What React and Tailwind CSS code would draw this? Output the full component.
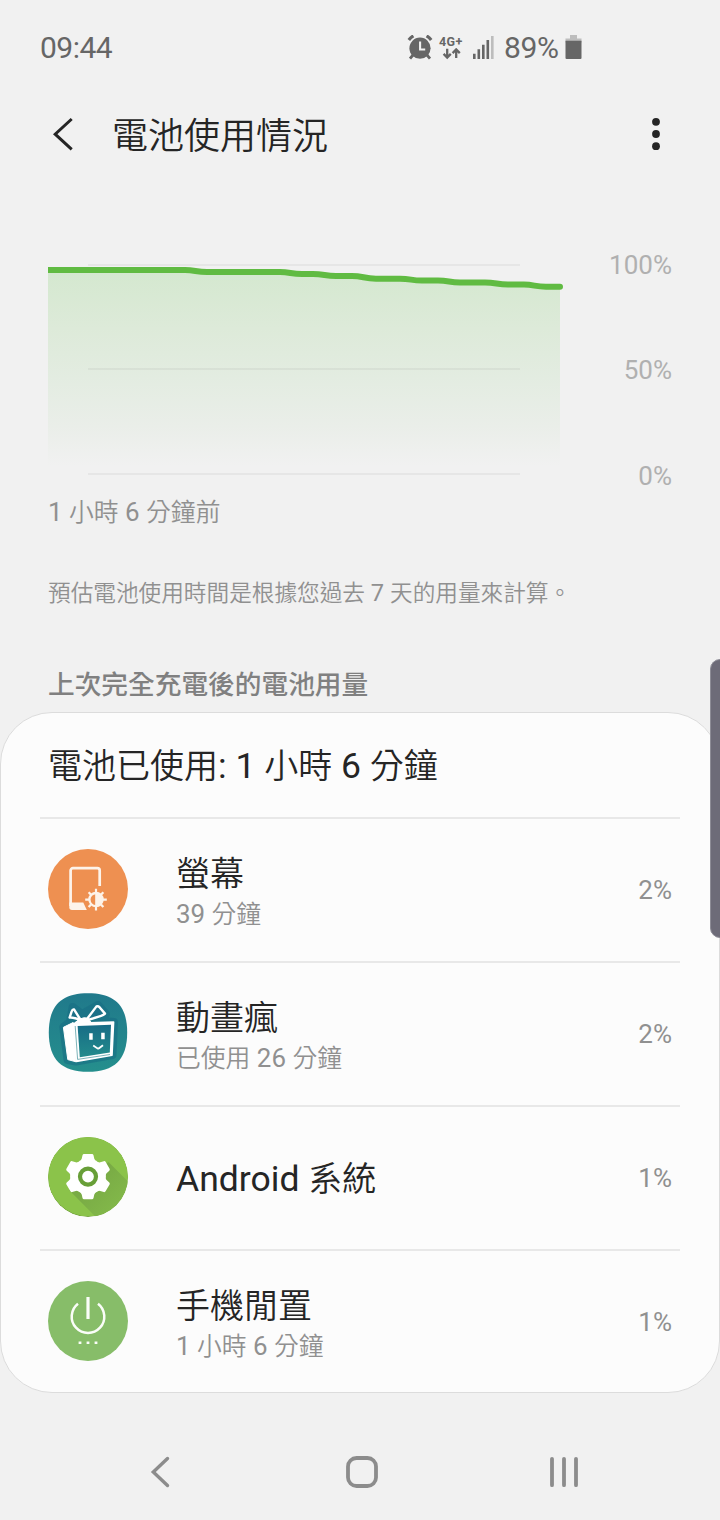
const apps = [
  { name: '螢幕', detail: '39 分鐘', percent: '2%', Icon: ScreenIcon },
  { name: '動畫瘋', detail: '已使用 26 分鐘', percent: '2%', Icon: GiftIcon },
  { name: 'Android 系統', detail: null, percent: '1%', Icon: SystemIcon },
  { name: '手機閒置', detail: '1 小時 6 分鐘', percent: '1%', Icon: IdleIcon },
];

// Latin runs are set slightly larger than the Chinese characters around them
function MixedText({ children }) {
  return children.split(/([\x20-\x7e]+)/).map((part, i) =>
    i % 2 ? (
      <span key={i} className="text-[1.045em] leading-none whitespace-pre">
        {part}
      </span>
    ) : (
      part
    )
  );
}

function ScreenIcon() {
  return (
    <svg width="80" height="80" viewBox="0 0 80 80" className="shrink-0">
      <circle cx="40" cy="40" r="40" fill="#ee9051" />
      <path d="M51.7 37V21.6a2.4 2.4 0 0 0-2.4-2.4H25a2.4 2.4 0 0 0-2.4 2.4V57" fill="none" stroke="#fdf3ea" strokeWidth="2.7" />
      <path d="M21.3 53.6H35.3L38.8 61H24a2.7 2.7 0 0 1-2.7-2.7z" fill="#fdf3ea" />
      <g transform="translate(48 50.6)" stroke="#fdf3ea" fill="none">
        <circle r="6.6" strokeWidth="2.3" />
        <path d="M-.8-6.3H0A6.3 6.3 0 0 1 0 6.3H-.8z" fill="#fdf3ea" stroke="none" />
        <path
          d="M0-10.8V-7M0 10.8V7M-10.8 0H-7M10.8 0H7M-7.4-7.4L-5-5M7.4-7.4L5-5M-7.4 7.4L-5 5M7.4 7.4L5 5"
          strokeWidth="2.2"
        />
      </g>
    </svg>
  );
}

function GiftIcon() {
  return (
    <svg width="80" height="80" viewBox="0 0 80 80" className="shrink-0">
      <defs>
        <linearGradient id="giftBg" x1="0" y1="0" x2="0" y2="1">
          <stop offset="0" stopColor="#20798b" />
          <stop offset="1" stopColor="#258f8d" />
        </linearGradient>
        <linearGradient id="giftScreen" x1="0" y1="0" x2="0" y2="1">
          <stop offset="0" stopColor="#176c86" />
          <stop offset="1" stopColor="#238b8c" />
        </linearGradient>
      </defs>
      <path
        d="M40 .3C66 .3 79.2 12 79.2 39.5S66 78.8 40 78.8.8 67 .8 39.5 14 .3 40 .3z"
        fill="url(#giftBg)"
      />
      <path
        d="M24.7 14L34 21 50 12 58 21 56 28 66 29 64.5 62 28 68.5 19.5 67 15.3 34 22 29z"
        fill="#176c83"
        stroke="#176c83"
        strokeWidth="8"
        strokeLinejoin="round"
        opacity=".55"
      />
      <path d="M15.4 34.3L25 29.6 28 68.8 19.8 66.6z" fill="#fff" stroke="#fff" strokeLinejoin="round" />
      <path d="M25.4 30.2L65.6 29 64 62.3 28.4 68.4z" fill="#fff" stroke="#fff" strokeWidth="1.6" strokeLinejoin="round" />
      <path d="M29.6 33L63 31.8 61.8 59.6 31.8 64.2z" fill="url(#giftScreen)" />
      <path d="M27.2 33L29.6 66.4 62 61.5" fill="none" stroke="#238089" strokeWidth=".6" />
      <path d="M33 27.5L26 16.4Q24.5 16 23.6 18.6L21.6 24.6Q26 24.2 33 27.5z" fill="#1b7087" stroke="#fff" strokeWidth="2.4" strokeLinejoin="round" />
      <path d="M38 27.3L48.5 13.4Q50 12.7 51.5 14.2L57 20.6Q56 22.6 38 27.3z" fill="#1b7087" stroke="#fff" strokeWidth="2.4" strokeLinejoin="round" />
      <path d="M27 29.6Q31 25.5 35.6 24.8T43 29.4z" fill="#fff" stroke="#fff" />
      <path d="M41.2 40.3h3.5v6.5h-3.5zM53.2 39.7h3.5v6.5h-3.5z" fill="#fff" />
      <path d="M45.2 52.6L49.6 55.4Q50.6 55.8 51.4 55L55 52.2" fill="none" stroke="#fff" strokeWidth="1.8" />
    </svg>
  );
}

const toothAngles = [0, 60, 120, 180, 240, 300];

function SystemIcon() {
  return (
    <svg width="80" height="80" viewBox="0 0 80 80" className="shrink-0">
      <defs>
        <clipPath id="systemClip">
          <circle cx="40" cy="40" r="40" />
        </clipPath>
        <linearGradient id="systemShadow" gradientUnits="userSpaceOnUse" x1="45" y1="45" x2="72" y2="72">
          <stop offset="0" stopColor="#79ab45" />
          <stop offset="1" stopColor="#83b94a" />
        </linearGradient>
      </defs>
      <g clipPath="url(#systemClip)">
        <circle cx="40" cy="40" r="40" fill="#6f9c3b" />
        <circle cx="40" cy="39.2" r="40" fill="#8bc34a" />
        <path d="M60.5 25L100 64.5V79.2H47L21 53z" fill="url(#systemShadow)" />
      </g>
      <g transform="translate(40 39.6)" fill="#fff">
        <circle r="17.8" />
        {toothAngles.map((angle) => (
          <path
            key={angle}
            transform={`rotate(${angle})`}
            d="M-10-14Q-7-15.4-6.3-17.8L-5.5-21.4Q-5.2-22.6-4-22.6H4Q5.2-22.6 5.5-21.4L6.3-17.8Q7-15.4 10-14z"
          />
        ))}
        <circle r="8" stroke="#689f38" strokeWidth="4.2" />
      </g>
    </svg>
  );
}

function IdleIcon() {
  return (
    <svg width="80" height="80" viewBox="0 0 80 80" className="shrink-0">
      <circle cx="40" cy="40" r="40" fill="#87bd69" />
      <path d="M30 22.8A16.3 16.3 0 1 0 50 22.8" fill="none" stroke="#fafdf8" strokeWidth="2.5" />
      <path d="M40 16V38" stroke="#fafdf8" strokeWidth="3.2" />
      <path d="M30.6 60.5h2.8v2.6h-2.8zM38.6 60.5h2.8v2.6h-2.8zM46.6 60.5h2.8v2.6h-2.8z" fill="#fafdf8" />
    </svg>
  );
}

function StatusBar() {
  return (
    <div className="flex h-24 items-center pl-10 text-[30px] text-[#666]">
      <span className="w-[367px] pb-px tracking-[-0.5px]">09:44</span>
      <svg width="26" height="26" viewBox="0 0 26 26" className="mr-[6px]">
        <circle cx="13" cy="13.2" r="10.6" fill="#666" />
        <path d="M1.8 4.9Q3.8 2.4 6.4 .9M24.2 4.9Q22.2 2.4 19.6 .9" fill="none" stroke="#666" strokeWidth="3.2" />
        <path d="M6 20L3 23.7M20 20L23 23.7" stroke="#666" strokeWidth="2.8" />
        <path d="M13.1 6.6V14.5H18.2" fill="none" stroke="#f1f1f1" strokeWidth="2.1" />
      </svg>
      <div className="flex w-[34px] flex-col pb-[2px]">
        <span className="h-[13px] text-[12.5px] leading-[13px] font-bold tracking-[0.4px]">4G+</span>
        <svg width="24" height="12" viewBox="0 0 24 12">
          <path d="M8.2 .8V9M4.6 5.9L8.2 9.6 11.8 5.9M17.2 10V2M13.6 5.1L17.2 1.4 20.8 5.1" fill="none" stroke="#666" strokeWidth="2.3" />
        </svg>
      </div>
      <svg width="22" height="24" viewBox="0 0 22 24" className="mr-[9px]">
        <path d="M0 17.7h2.6V23H0zM4.5 13.3h2.6V23H4.5zM9 8.7h2.6V23H9zM13.5 4h2.6V23h-2.6z" fill="#666" />
        <path d="M18 0h2.6v23H18z" fill="#bdbdbd" />
      </svg>
      <span className="w-[61px] pb-px tracking-[-0.3px]">89%</span>
      <svg width="17" height="26" viewBox="0 0 17 26">
        <path d="M5 0h7v3.5H16.5V7.5H.5V3.5H5z" fill="#bdbdbd" />
        <path d="M.5 5.8h16V23a1 1 0 0 1-1 1h-14a1 1 0 0 1-1-1z" fill="#666" />
      </svg>
    </div>
  );
}

function AppBar() {
  return (
    <header className="flex h-[76px] items-center justify-between pr-[58px] pl-[50px]">
      <div className="flex items-center">
        <svg width="26" height="36" viewBox="0 0 26 36">
          <path d="M21.7 3L5.2 18.2 21.7 33.4" fill="none" stroke="#252525" strokeWidth="3" />
        </svg>
        <h1 className="ml-9 pt-[5px] text-[36px] leading-[48px]">電池使用情況</h1>
      </div>
      <svg width="12" height="36" viewBox="0 0 12 36" fill="#252525">
        <circle cx="6" cy="5.8" r="3.9" />
        <circle cx="6" cy="18" r="3.9" />
        <circle cx="6" cy="30.2" r="3.9" />
      </svg>
    </header>
  );
}

function BatteryChart() {
  return (
    <section className="flex h-[318px] pt-[68px] pl-12">
      <svg width="530" height="250" viewBox="48 240 530 250" className="shrink-0">
        <defs>
          <linearGradient id="fill" gradientUnits="userSpaceOnUse" x1="0" y1="270" x2="0" y2="466">
            <stop offset="0" stopColor="#d4e8cf" />
            <stop offset=".3" stopColor="#ddead9" />
            <stop offset=".55" stopColor="#e3ece1" />
            <stop offset=".8" stopColor="#eaeee9" />
            <stop offset="1" stopColor="#f1f1f1" />
          </linearGradient>
        </defs>
        <path
          d="M48 270H185C195 270 196 272 207 272H280C290 272 291 274 302 274H313C324 274 325 276 336 276H352C363 276 364 278.7 376 278.7H400C411 278.7 411 280.6 422 280.6H438C449 280.6 449 282.5 460 282.5H485C496 282.5 497 284.6 508 284.6H524C534 284.6 535 286.7 546 286.7H560V466H48z"
          fill="url(#fill)"
        />
        <path d="M88 265H520M88 369H520M88 474H520" stroke="#000" strokeOpacity=".045" strokeWidth="2" />
        <path
          d="M44 270H185C195 270 196 272 207 272H280C290 272 291 274 302 274H313C324 274 325 276 336 276H352C363 276 364 278.7 376 278.7H400C411 278.7 411 280.6 422 280.6H438C449 280.6 449 282.5 460 282.5H485C496 282.5 497 284.6 508 284.6H524C534 284.6 535 286.7 546 286.7H560"
          fill="none"
          stroke="#60bb42"
          strokeWidth="6"
          strokeLinecap="round"
        />
      </svg>
      <div className="flex h-[250px] w-[94px] flex-col pt-[9px] text-right text-[26px] leading-[32px] text-[#b0b0b0]">
        <span>100%</span>
        <span className="mt-[73px]">50%</span>
        <span className="mt-[74px]">0%</span>
      </div>
    </section>
  );
}

function AppRow({ name, detail, percent, Icon }) {
  return (
    <li className="flex h-36 items-center border-t-2 border-[#e8e8e8] pr-2 pb-[2px] pl-2">
      <Icon />
      <div className={detail ? 'ml-12 grow pt-[6px]' : 'ml-12 grow pt-[3px]'}>
        <p className="text-[34px] leading-[46px]">
          <MixedText>{name}</MixedText>
        </p>
        {detail && (
          <p className="text-[24.8px] leading-[36px] text-[#909090]">
            <MixedText>{detail}</MixedText>
          </p>
        )}
      </div>
      <span className="pt-[2px] text-[26px] text-[#909090]">{percent}</span>
    </li>
  );
}

function NavBar() {
  return (
    <nav className="flex h-[127px] items-center justify-center gap-[170px] pt-[31px] pl-1">
      <svg width="32" height="32" viewBox="0 0 32 32">
        <path d="M23.5 2.5L9.3 16 23.5 29.5" fill="none" stroke="#8c8c8c" strokeWidth="3.4" strokeLinecap="round" />
      </svg>
      <svg width="32" height="32" viewBox="0 0 32 32">
        <rect x="2" y="2" width="28" height="28" rx="8.5" fill="none" stroke="#8c8c8c" strokeWidth="3.8" />
      </svg>
      <svg width="32" height="32" viewBox="0 0 32 32">
        <path d="M4 2.8V29.2M16 2.8V29.2M28 2.8V29.2" stroke="#8c8c8c" strokeWidth="3.8" strokeLinecap="round" />
      </svg>
    </nav>
  );
}

export default function App() {
  return (
    <div className="relative h-[1520px] w-[720px] overflow-hidden bg-[#f1f1f1] font-['Roboto','Noto_Sans_CJK_TC_DemiLight','Noto_Sans_CJK_TC',sans-serif] text-[#252525]">
      <StatusBar />
      <AppBar />
      <BatteryChart />

      <div className="flex h-[222px] flex-col pl-12 text-[#909090]">
        <p className="mt-[5px] text-[24.8px] leading-[36px]">
          <MixedText>1 小時 6 分鐘前</MixedText>
        </p>
        <p className="mt-[45px] text-[22.65px] leading-[36px]">
          <MixedText>預估電池使用時間是根據您過去 7 天的用量來計算。</MixedText>
        </p>
        <h2 className="mt-[53px] font-['Noto_Sans_CJK_TC',sans-serif] text-[26.7px] leading-[36px] font-medium text-[#808080]">
          上次完全充電後的電池用量
        </h2>
      </div>

      <main className="h-[681px] rounded-[52px] border border-[#dcdcdc] bg-[#fcfcfc] px-[39px]">
        <h3 className="h-[104px] pt-[28px] pl-2 text-[34px] leading-[50px]">
          <MixedText>電池已使用: 1 小時 6 分鐘</MixedText>
        </h3>
        <ul>
          {apps.map((app) => (
            <AppRow key={app.name} {...app} />
          ))}
        </ul>
      </main>

      <NavBar />

      {/* Edge panel handle */}
      <div className="absolute top-[659px] -right-[10px] h-[279px] w-5 rounded-[10px] border border-[#8d8c96] bg-[#6d6b78]" />
    </div>
  );
}
